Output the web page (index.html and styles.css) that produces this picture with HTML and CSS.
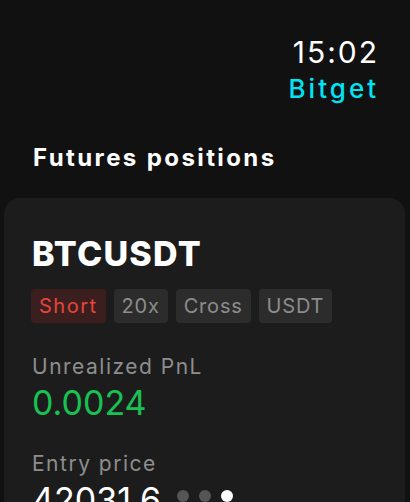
FILE: index.html
```html
<!DOCTYPE html>
<html lang="en">
<head>
<meta charset="utf-8">
<title>Bitget - Futures positions</title>
<link rel="stylesheet" href="styles.css">
</head>
<body>
<div class="screen">
  <header class="status">
    <div class="time">15:02</div>
    <div class="app">Bitget</div>
  </header>
  <h1 class="title">Futures positions</h1>
  <section class="card">
    <h2 class="symbol">BTCUSDT</h2>
    <div class="tags">
      <span class="tag tag-short">Short</span>
      <span class="tag">20x</span>
      <span class="tag">Cross</span>
      <span class="tag">USDT</span>
    </div>
    <div class="field">
      <div class="label">Unrealized PnL</div>
      <div class="value value-up">0.0024</div>
    </div>
    <div class="field">
      <div class="label">Entry price</div>
      <div class="value">42031.6</div>
    </div>
  </section>
  <div class="pager">
    <span class="dot"></span>
    <span class="dot"></span>
    <span class="dot dot-active"></span>
  </div>
</div>
</body>
</html>
```

FILE: styles.css
```css
html, body {
  margin: 0;
  padding: 0;
  background: #111111;
  height: 100%;
  overflow: hidden;
}

body {
  font-family: Inter, "Noto Sans", "DejaVu Sans", sans-serif;
  color: #ffffff;
}

.screen {
  position: relative;
  height: 502px;
  overflow: hidden;
}

.status {
  display: flex;
  flex-direction: column;
  align-items: flex-end;
  gap: 4px;
  padding: 34px 30px 0 0;
}

.time {
  font-size: 30px;
  line-height: 36px;
  font-weight: 400;
  color: #ffffff;
  letter-spacing: 2px;
  margin-right: 1px;
}

.app {
  font-size: 26px;
  line-height: 30px;
  font-weight: 500;
  color: #00e4f5;
  letter-spacing: 3px;
  margin-right: 1px;
}

.title {
  margin: 39px 0 0 33px;
  font-size: 24px;
  line-height: 30px;
  font-weight: 700;
  letter-spacing: 2.4px;
}

.card {
  margin: 25px 5px 0 4px;
  padding: 36px 28px 40px 28px;
  background: #1c1c1c;
  border-radius: 16px;
  display: flex;
  flex-direction: column;
}

.symbol {
  margin: 0;
  font-size: 34px;
  line-height: 40px;
  font-weight: 800;
  letter-spacing: 1.2px;
}

.tags {
  display: flex;
  gap: 8px;
  margin: 15px 0 0 -1px;
}

.tag {
  height: 34px;
  line-height: 34px;
  padding: 0 8px;
  border-radius: 4px;
  background: #2c2c2c;
  color: #8c8c8c;
  font-size: 20px;
  letter-spacing: 0.8px;
}

.tag-short {
  background: #3a1f1e;
  color: #e8443c;
  letter-spacing: 1.5px;
}

.field {
  display: flex;
  flex-direction: column;
  gap: 3px;
  margin-top: 28px;
}

.tags + .field {
  margin-top: 31px;
}

.label {
  font-size: 21px;
  line-height: 26px;
  color: #8e8e8e;
  letter-spacing: 1.5px;
}

.value {
  font-size: 34px;
  line-height: 40px;
  color: #ffffff;
}

.value-up {
  color: #19c152;
}

.pager {
  position: absolute;
  left: 0;
  right: 0;
  top: 490px;
  display: flex;
  justify-content: center;
  gap: 10px;
}

.dot {
  width: 12px;
  height: 12px;
  border-radius: 50%;
  background: #555555;
}

.dot-active {
  background: #ffffff;
}
```
